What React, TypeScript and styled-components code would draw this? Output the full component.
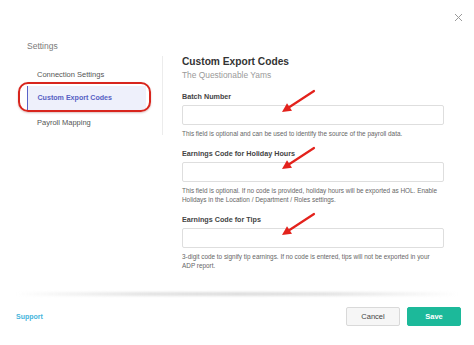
import React from 'react';
import styled, { createGlobalStyle } from 'styled-components';

const GlobalStyle = createGlobalStyle`
  html, body {
    margin: 0;
    padding: 0;
    background: #ffffff;
  }
  body {
    font-family: "Liberation Sans", Arial, sans-serif;
    -webkit-font-smoothing: antialiased;
  }
`;

const Modal = styled.div`
  width: 474px;
  height: 345px;
  display: flex;
  flex-direction: column;
  background: #ffffff;
  overflow: hidden;
`;

const Header = styled.div`
  height: 36px;
  display: flex;
  justify-content: flex-end;
  align-items: flex-start;
  padding: 12px 11px 0 0;
  box-sizing: border-box;
`;

const CloseButton = styled.button`
  width: 10px;
  height: 10px;
  padding: 0;
  border: none;
  background: none;
  display: flex;
  align-items: center;
  justify-content: center;
  cursor: pointer;
`;

const Main = styled.div`
  flex: 1;
  display: flex;
  padding-left: 27px;
`;

const Sidebar = styled.div`
  width: 136px;
  display: flex;
  flex-direction: column;
`;

const SidebarTitle = styled.div`
  margin-top: 4px;
  height: 16px;
  line-height: 12px;
  font-size: 8.5px;
  color: #7a7a7a;
`;

const Nav = styled.nav`
  border-right: 1px solid #ececec;
  padding: 6px 16px 1px 0;
  display: flex;
  flex-direction: column;
`;

const NavItem = styled.div<{ $active?: boolean }>`
  position: relative;
  height: 24px;
  display: flex;
  align-items: center;
  padding-left: ${(p) => (p.$active ? '9.5px' : '10px')};
  font-size: ${(p) => (p.$active ? '7.1px' : '7.5px')};
  font-weight: ${(p) => (p.$active ? 700 : 400)};
  color: ${(p) => (p.$active ? '#5660c4' : '#555555')};
  background: ${(p) => (p.$active ? '#eef0fb' : 'transparent')};
  border-left: ${(p) => (p.$active ? '1.5px solid #5a63c8' : 'none')};
`;

const Highlight = styled.span`
  position: absolute;
  left: -10px;
  right: -5px;
  top: -4px;
  bottom: -2px;
  border: 2.5px solid #d8251d;
  border-radius: 10px;
  box-shadow: 0 1px 2px rgba(120, 0, 0, 0.25);
  pointer-events: none;
`;

const Content = styled.div`
  flex: 1;
  padding: 19px 30px 0 19px;
  display: flex;
  flex-direction: column;
`;

const Title = styled.h2`
  margin: 0;
  font-size: 10.2px;
  line-height: 14px;
  font-weight: 700;
  color: #333333;
`;

const Subtitle = styled.div`
  font-size: 8.4px;
  line-height: 11px;
  margin-top: 0.5px;
  color: #9a9a9a;
`;

const Field = styled.div<{ $gap: number }>`
  position: relative;
  margin-top: ${(p) => p.$gap}px;
  display: flex;
  flex-direction: column;
`;

const Label = styled.label`
  font-size: 7.2px;
  line-height: 10px;
  font-weight: 700;
  color: #444444;
  margin-bottom: 3.5px;
`;

const Input = styled.input`
  height: 20px;
  box-sizing: border-box;
  border: 1px solid #dedede;
  border-radius: 2px;
  background: #ffffff;
  padding: 0 6px;
  outline: none;
`;

const Help = styled.p`
  margin: 4px 0 0;
  font-size: 6.4px;
  line-height: 9px;
  color: #666666;
`;

const ArrowMark = styled.svg`
  position: absolute;
  left: 96px;
  top: -4px;
  pointer-events: none;
`;

const Footer = styled.div`
  display: flex;
  flex-direction: column;
  padding-bottom: 19px;
`;

const Separator = styled.div`
  height: 4px;
  margin: 0 15px;
  background: linear-gradient(
    90deg,
    rgba(230, 230, 230, 0) 0%,
    rgba(225, 225, 225, 0.9) 30%,
    rgba(222, 222, 222, 1) 50%,
    rgba(225, 225, 225, 0.9) 70%,
    rgba(230, 230, 230, 0) 100%
  );
  filter: blur(1px);
`;

const FooterRow = styled.div`
  margin-top: 11px;
  padding: 0 13px 0 16px;
  display: flex;
  align-items: center;
  justify-content: space-between;
`;

const SupportLink = styled.a`
  font-size: 7px;
  font-weight: 700;
  color: #45b5dc;
  text-decoration: none;
`;

const Buttons = styled.div`
  display: flex;
  gap: 7px;
`;

const Button = styled.button<{ $primary?: boolean }>`
  width: 54px;
  height: 19px;
  box-sizing: border-box;
  border-radius: 2px;
  font-family: inherit;
  font-size: 7.5px;
  font-weight: ${(p) => (p.$primary ? 700 : 400)};
  color: ${(p) => (p.$primary ? '#ffffff' : '#444444')};
  background: ${(p) => (p.$primary ? '#1cb99a' : '#f6f6f6')};
  border: 1px solid ${(p) => (p.$primary ? '#1cb99a' : '#d9d9d9')};
  cursor: pointer;
`;

const Arrow = () => (
  <ArrowMark width="40" height="28" viewBox="0 0 40 28">
    <line x1="36" y1="3" x2="11.5" y2="19" stroke="#e3221c" strokeWidth="2.2" strokeLinecap="round" />
    <polygon points="4,24 14,22.8 9,15.3" fill="#e3221c" />
  </ArrowMark>
);

const fields = [
  {
    label: 'Batch Number',
    help: 'This field is optional and can be used to identify the source of the payroll data.',
    gap: 11,
  },
  {
    label: 'Earnings Code for Holiday Hours',
    help: 'This field is optional. If no code is provided, holiday hours will be exported as HOL. Enable Holidays in the Location / Department / Roles settings.',
    gap: 10.5,
  },
  {
    label: 'Earnings Code for Tips',
    help: '3-digit code to signify tip earnings. If no code is entered, tips will not be exported in your ADP report.',
    gap: 10.5,
  },
];

const navItems = ['Connection Settings', 'Custom Export Codes', 'Payroll Mapping'];

export default function App() {
  return (
    <>
      <GlobalStyle />
      <Modal>
        <Header>
          <CloseButton aria-label="Close">
            <svg width="9" height="9" viewBox="0 0 9 9">
              <path d="M1 1L8 8M8 1L1 8" stroke="#9a9a9a" strokeWidth="1" />
            </svg>
          </CloseButton>
        </Header>
        <Main>
          <Sidebar>
            <SidebarTitle>Settings</SidebarTitle>
            <Nav>
              {navItems.map((item) => (
                <NavItem key={item} $active={item === 'Custom Export Codes'}>
                  {item}
                  {item === 'Custom Export Codes' && <Highlight />}
                </NavItem>
              ))}
            </Nav>
          </Sidebar>
          <Content>
            <Title>Custom Export Codes</Title>
            <Subtitle>The Questionable Yams</Subtitle>
            {fields.map((f) => (
              <Field key={f.label} $gap={f.gap}>
                <Label>{f.label}</Label>
                <Input />
                <Help>{f.help}</Help>
                <Arrow />
              </Field>
            ))}
          </Content>
        </Main>
        <Footer>
          <Separator />
          <FooterRow>
            <SupportLink href="#">Support</SupportLink>
            <Buttons>
              <Button>Cancel</Button>
              <Button $primary>Save</Button>
            </Buttons>
          </FooterRow>
        </Footer>
      </Modal>
    </>
  );
}
